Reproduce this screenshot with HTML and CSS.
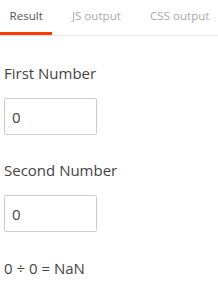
FILE: index.html
```html
<!DOCTYPE html>
<html lang="en">
<head>
    <meta charset="UTF-8">
    <meta name="viewport" content="width=device-width, initial-scale=1.0">
    <title>Divide</title>
    <link rel="stylesheet" href="styles.css">
</head>
<body>

    <div class="tabs">
        <div class="tab active">Result</div>
        <div class="tab">JS output</div>
        <div class="tab">CSS output</div>
    </div>

    <div class="result">
        <label class="field-label" for="first">First Number</label>
        <input class="num" type="text" id="first" value="0">

        <label class="field-label" for="second">Second Number</label>
        <input class="num" type="text" id="second" value="0">

        <p class="answer">0 ÷ 0 = NaN</p>
    </div>

</body>
</html>
```

FILE: styles.css
```css
body {
    margin: 0;
    font-family: "Open Sans", "Noto Sans", sans-serif;
    background-color: #fff;
    color: #333;
}
.tabs {
    display: flex;
    gap: 10px;
    height: 35px;
    overflow: hidden;
    border-bottom: 1px solid #e6e6e6;
}
.tab {
    flex-shrink: 0;
    white-space: nowrap;
    padding: 0 9.5px;
    font-size: 11.6px;
    line-height: 32px;
    color: #aaa;
    border-bottom: 3px solid transparent;
}
.tab.active {
    color: #555;
    border-bottom-color: #ff3c00;
}
.result {
    padding: 2px 4px 0;
}
.field-label {
    display: block;
    font-size: 15px;
    color: #444;
    margin-top: 25px;
    margin-bottom: 15px;
}
.num {
    display: block;
    box-sizing: border-box;
    width: 93px;
    height: 37px;
    padding: 0 7px;
    border: 1px solid #ccc;
    border-radius: 2px;
    font-family: inherit;
    font-size: 15px;
    color: #444;
    outline: none;
}
.answer {
    font-size: 15px;
    color: #444;
    margin: 26px 0 0;
}
```
